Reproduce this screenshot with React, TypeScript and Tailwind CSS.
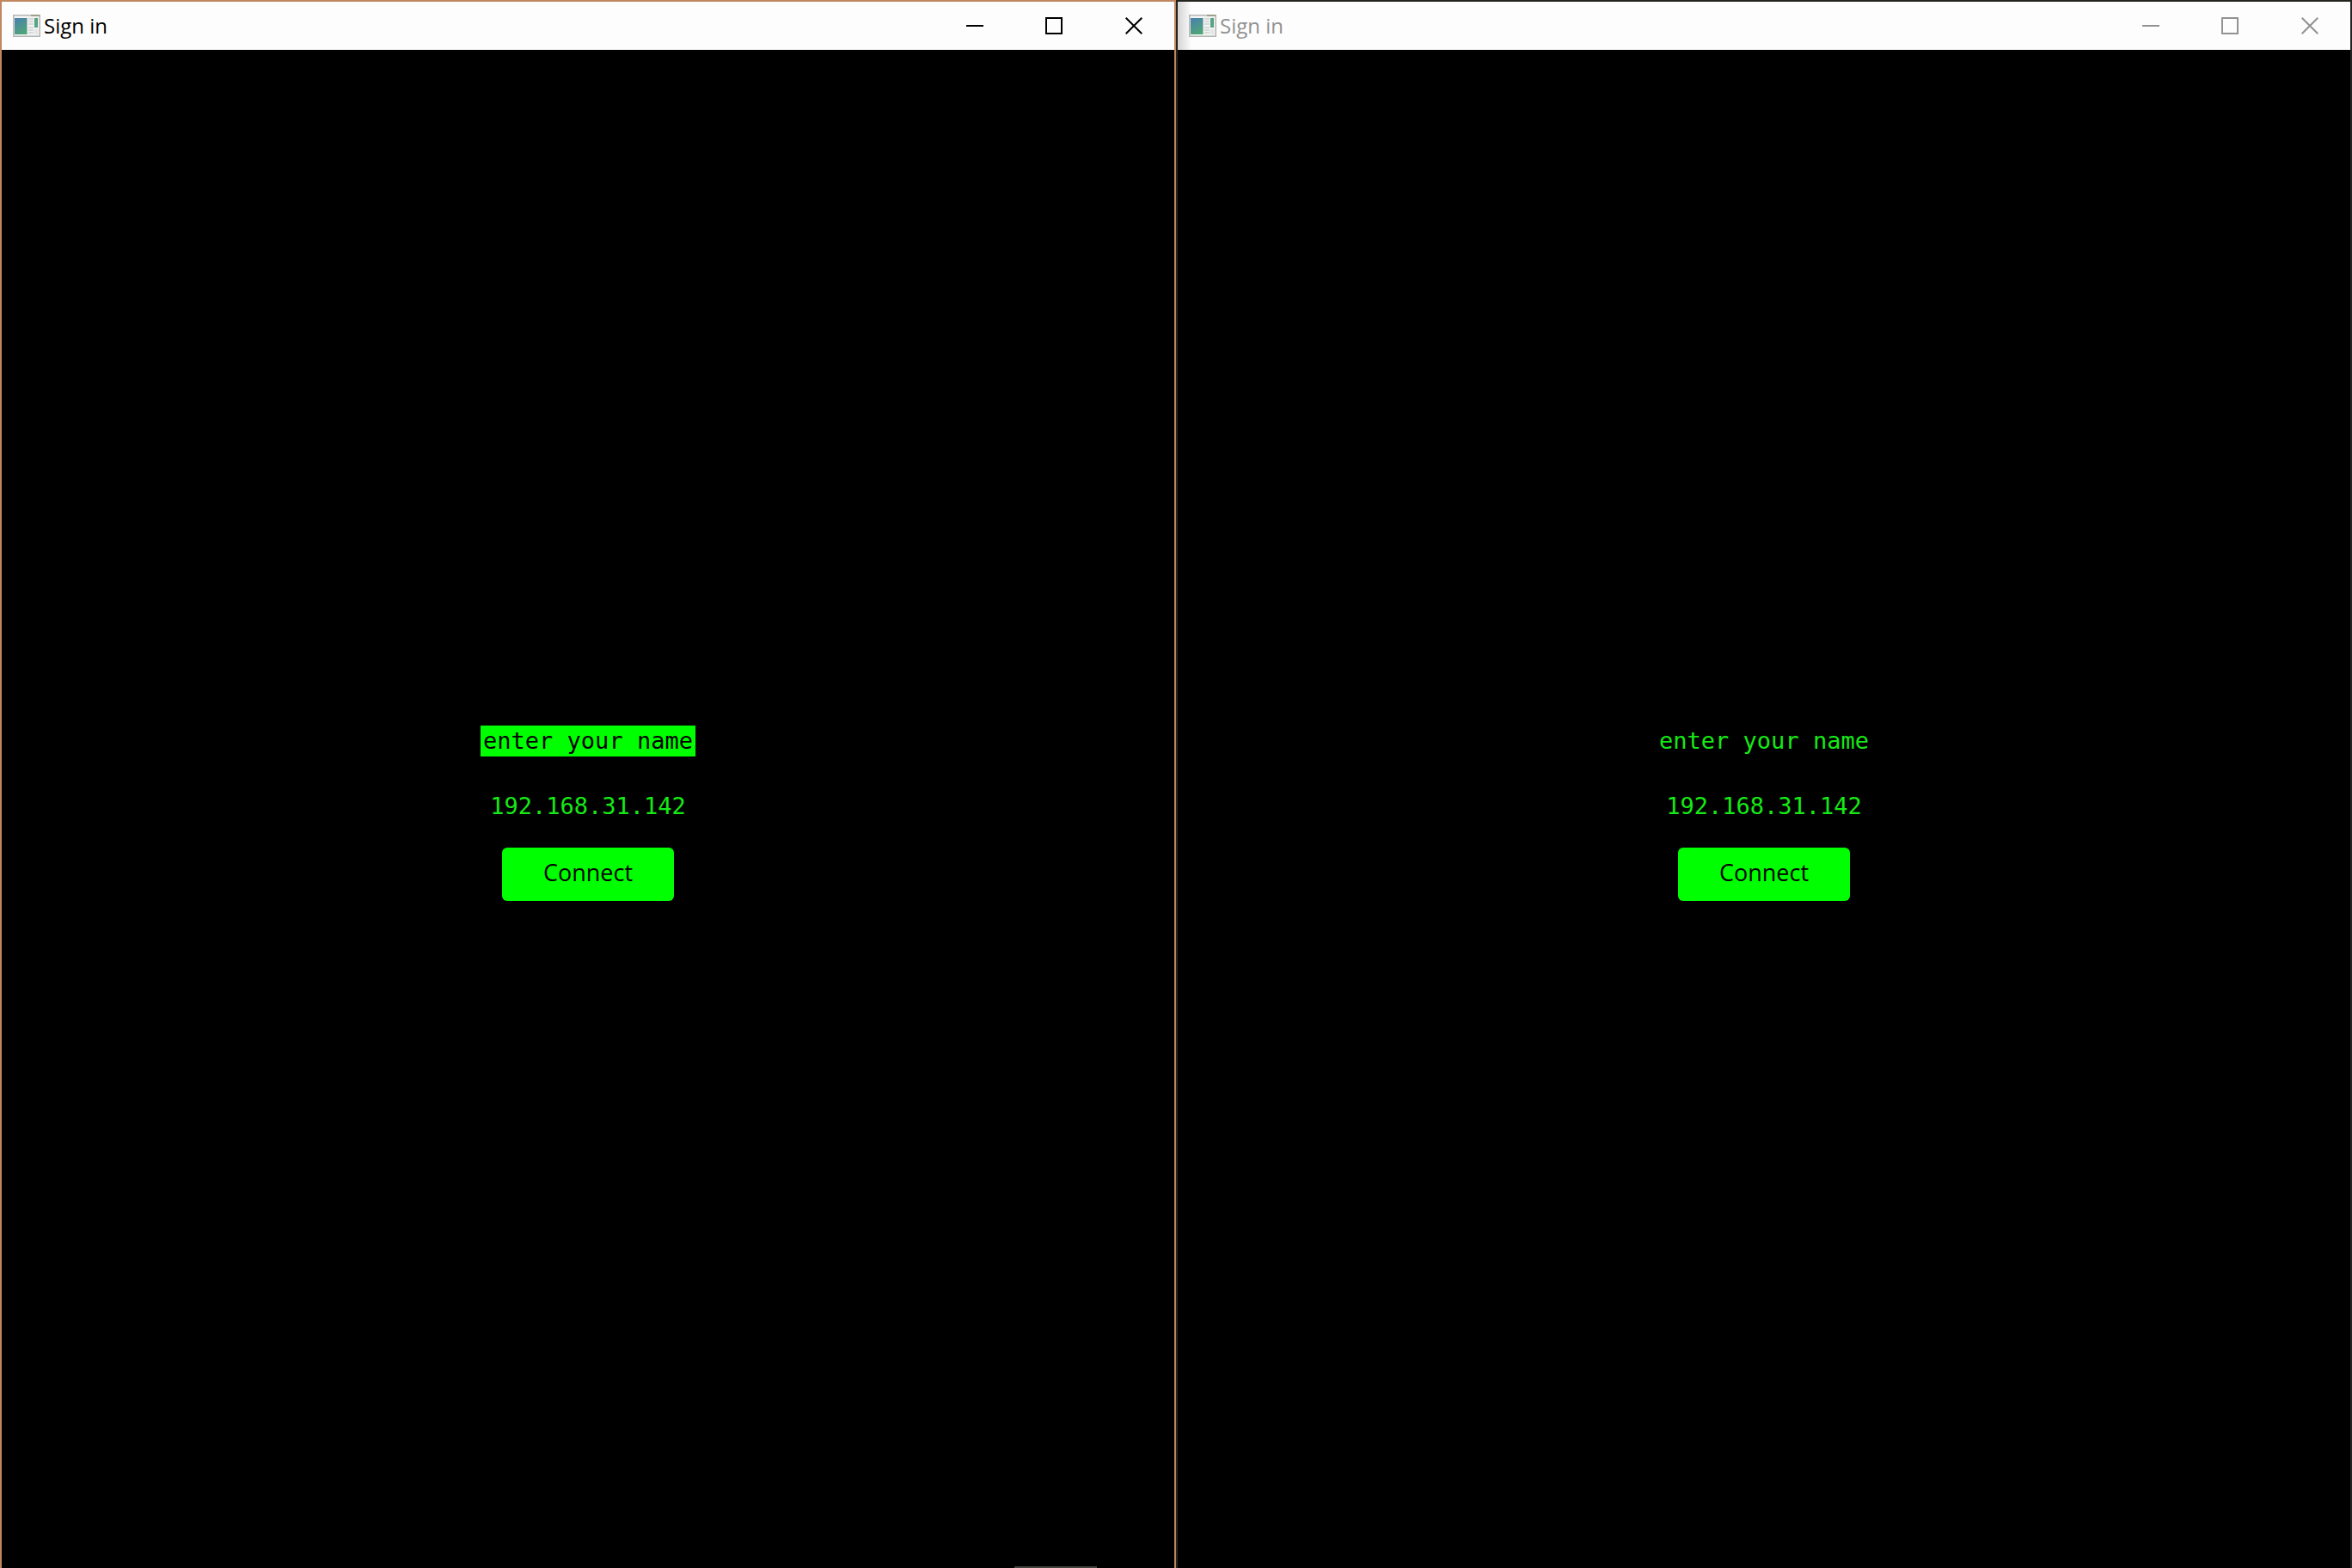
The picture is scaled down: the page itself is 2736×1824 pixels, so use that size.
import React, { useId } from "react";

function AppIcon({ id }: { id: string }) {
  return (
    <svg width="32" height="26" viewBox="0 0 32 26" aria-hidden="true">
      <defs>
        <linearGradient id={id} x1="0" y1="0" x2="0.4" y2="1">
          <stop offset="0" stopColor="#4a7fb0" />
          <stop offset="1" stopColor="#4fa37a" />
        </linearGradient>
      </defs>
      <rect x="0.75" y="0.75" width="30.5" height="24.5" fill="#f2f3f2" stroke="#b4b6b6" strokeWidth="1.5" />
      <path d="M21 1H31" stroke="#8f9476" strokeWidth="1.5" />
      <rect x="2" y="4" width="14.500" height="19" fill={`url(#${id})`} />
      <path d="M18 5h6M18 8h6M18 11h6M18 15h6M18 18h6M18 21h6" stroke="#cfd2d2" strokeWidth="1.5" />
      <rect x="25" y="4" width="4" height="11" fill="#55a584" />
      <rect x="25" y="17" width="4" height="6" fill="#e4e6e4" />
    </svg>
  );
}

const buttonBase = "flex h-full items-center justify-center";

function Window({ active }: { active: boolean }) {
  const id = useId();
  return (
    <section
      className={`flex min-w-0 flex-1 flex-col border-x-2 border-t-2 bg-black ${
        active ? "border-[#bf8660]" : "border-[#24241f]"
      }`}
    >
      <header
        className={`flex h-14 shrink-0 items-center bg-[#fdfdfd] ${
          active
            ? "text-black"
            : "bg-linear-to-r from-[#d4d4d4] via-[#fdfdfd] via-[16px] to-[#fdfdfd] text-[#929292]"
        }`}
      >
        <div className="flex flex-1 items-center gap-1 pl-[13px]">
          <AppIcon id={`${id}icon`} />
          <h1 className="font-['Open_Sans',sans-serif] text-[24px] leading-8">Sign in</h1>
        </div>
        <button aria-label="Minimize" className={`${buttonBase} w-[92px]`}>
          <svg width="20" height="20" viewBox="0 0 20 20">
            <path d="M0 10H20" stroke="currentColor" strokeWidth="2" />
          </svg>
        </button>
        <button aria-label="Maximize" className={`${buttonBase} w-[92px]`}>
          <svg width="20" height="20" viewBox="0 0 20 20">
            <rect x="1" y="1" width="18" height="18" fill="none" stroke="currentColor" strokeWidth="2" />
          </svg>
        </button>
        <button aria-label="Close" className={`${buttonBase} w-[94px]`}>
          <svg width="20" height="20" viewBox="0 0 20 20">
            <path d="M0.700 0.700L19.300 19.300M19.300 0.700L0.700 19.300" stroke="currentColor" strokeWidth="2" />
          </svg>
        </button>
      </header>
      <form
        className="flex flex-1 flex-col items-center justify-center gap-5"
        onSubmit={(e) => e.preventDefault()}
      >
        <div className="flex h-14 items-center">
          <input
            type="text"
            aria-label="Name"
            defaultValue="enter your name"
            className={`h-9 w-[250px] text-center font-['DejaVu_Sans_Mono',monospace] text-[27px] outline-none ${
              active ? "bg-[#00ff00] text-black" : "bg-black text-[#16e916]"
            }`}
          />
        </div>
        <div className="flex h-14 items-center">
          <input
            type="text"
            aria-label="Server address"
            defaultValue="192.168.31.142"
            className="h-9 w-[250px] bg-black text-center font-['DejaVu_Sans_Mono',monospace] text-[27px] text-[#16e916] outline-none"
          />
        </div>
        <button
          type="submit"
          className="h-[62px] w-[200px] rounded-[6px] bg-[#00ff00] pb-1 font-['Open_Sans',sans-serif] text-[27px] text-black"
        >
          Connect
        </button>
      </form>
    </section>
  );
}

export default function App() {
  return (
    <main className="relative flex min-h-screen bg-black">
      <Window active />
      <Window active={false} />
      <div className="absolute bottom-0 left-[1180px] h-0.5 w-24 bg-[#44443f]" />
    </main>
  );
}
